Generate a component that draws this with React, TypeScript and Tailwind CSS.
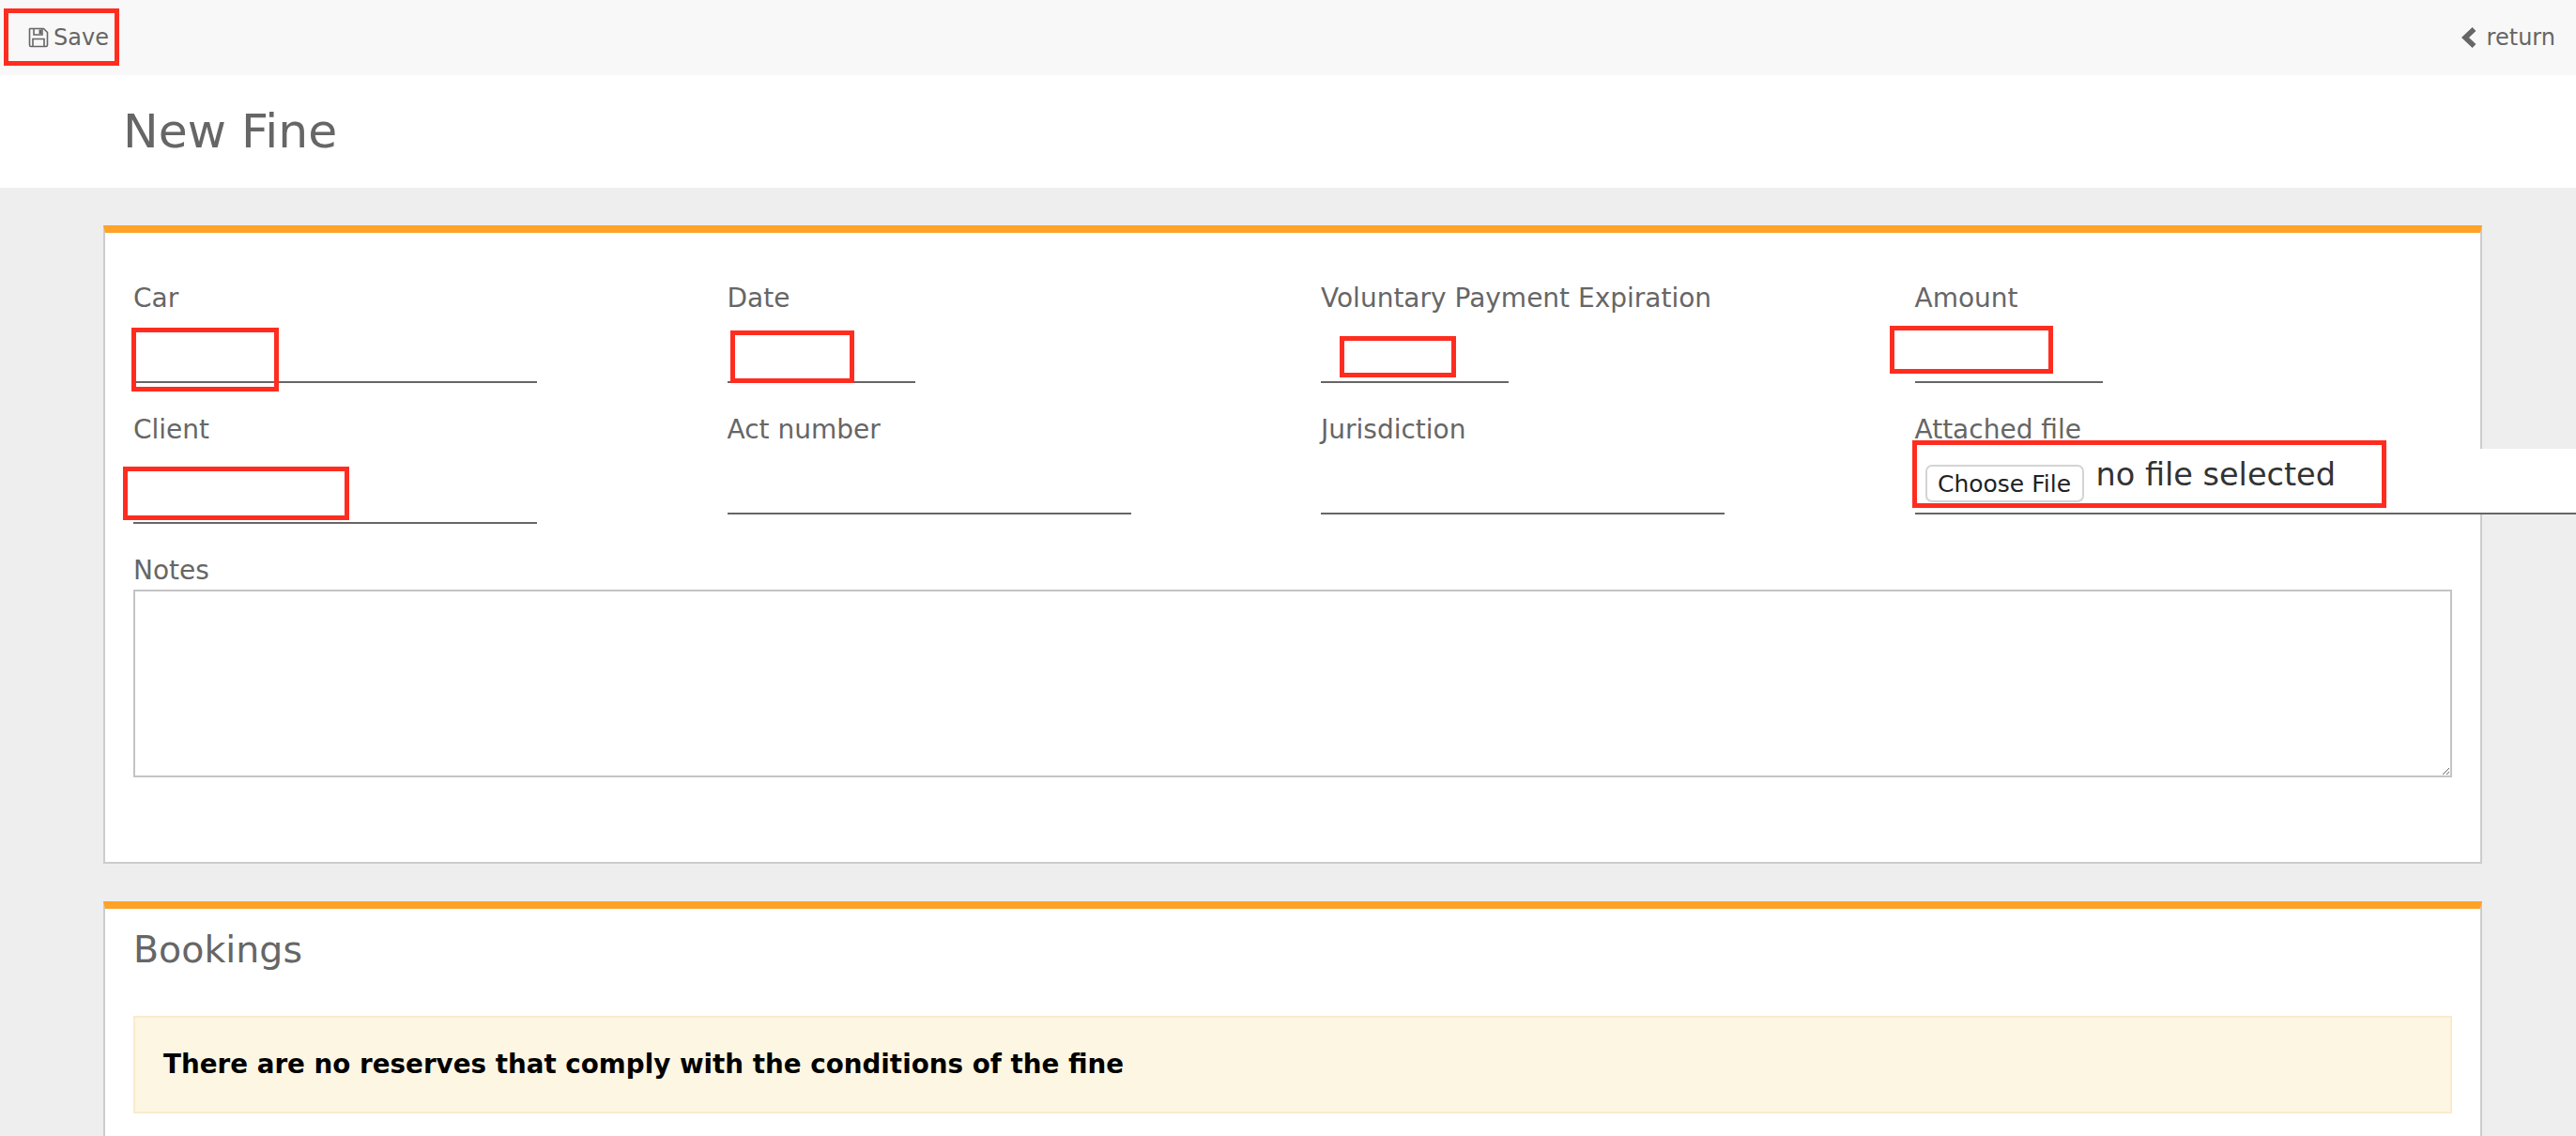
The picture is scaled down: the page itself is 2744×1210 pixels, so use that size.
import React from 'react';

// red rectangles drawn on top of the screenshot
const marks = [
  { id: 'save', className: 'left-[4px] top-[9px] w-[123px] h-[61px]' },
  { id: 'car', className: 'left-[140px] top-[349px] w-[157px] h-[68px]' },
  { id: 'date', className: 'left-[778px] top-[352px] w-[132px] h-[56px]' },
  { id: 'expiration', className: 'left-[1427px] top-[358px] w-[124px] h-[44px]' },
  { id: 'amount', className: 'left-[2013px] top-[347px] w-[174px] h-[51px]' },
  { id: 'client', className: 'left-[131px] top-[497px] w-[241px] h-[57px]' },
  { id: 'file', className: 'left-[2037px] top-[469px] w-[505px] h-[72px]' },
];

function SaveIcon() {
  return (
    <svg width="22" height="22" viewBox="0 0 22 22" fill="none" className="shrink-0">
      <path d="M2 1.5H16.5L20.5 5.5V19C20.5 19.8 19.8 20.5 19 20.5H3C2.2 20.5 1.5 19.8 1.5 19V2C1.5 1.7 1.7 1.5 2 1.5Z" stroke="#666" strokeWidth="1.6" />
      <path d="M6 1.5V8H15V1.5" stroke="#666" strokeWidth="1.6" />
      <rect x="11.5" y="2.5" width="2.5" height="4.5" fill="#666" />
      <path d="M5 20.5V12.5H17V20.5" stroke="#666" strokeWidth="1.6" />
    </svg>
  );
}

function Field({ label, width, height = 'h-[70px]' }: { label: string; width: string; height?: string }) {
  return (
    <div className="px-[30px]">
      <label className="block h-[40px] leading-[40px]">{label}</label>
      <input type="text" className={`block ${width} ${height} border-b-2 border-[#666] bg-transparent outline-none`} />
    </div>
  );
}

export default function App() {
  return (
    <div className="relative h-screen overflow-hidden bg-[#eeeeee] text-[#666666] text-[28px] font-['DejaVu_Sans',sans-serif]">
      {/* Toolbar */}
      <div className="h-[80px] bg-[#f8f8f8] flex items-center justify-between pl-[30px] pr-[22px]">
        <a className="flex items-center gap-[5px] text-[24px]">
          <SaveIcon />
          Save
        </a>
        <a className="flex items-center gap-[11px] text-[24px]">
          <svg width="16" height="24" viewBox="0 0 16 24" fill="none">
            <path d="M13.5 3L4 12L13.5 21" stroke="#666" strokeWidth="5.5" />
          </svg>
          return
        </a>
      </div>

      {/* Title */}
      <div className="h-[120px] bg-white flex items-center pl-[131px]">
        <h1 className="text-[50.4px] font-normal">New Fine</h1>
      </div>

      <div className="pt-[40px] pl-[110px] pr-[100px]">
        {/* Form card */}
        <section className="h-[680px] bg-white border-2 border-t-8 border-[#cccccc] border-t-[#ffa227] pt-[50px]">
          <div className="grid grid-cols-4 gap-y-[30px]">
            <Field label="Car" width="w-[430px]" />
            <Field label="Date" width="w-[200px]" />
            <Field label="Voluntary Payment Expiration" width="w-[200px]" />
            <Field label="Amount" width="w-[200px]" />
            <Field label="Client" width="w-[430px]" height="h-[80px]" />
            <Field label="Act number" width="w-[430px]" />
            <Field label="Jurisdiction" width="w-[430px]" />
            <div className="px-[30px]">
              <label className="block h-[40px] leading-[40px]">Attached file</label>
              <div className="w-[704px] h-[70px] border-b-2 border-[#666] bg-white flex items-start pl-[11px] pt-[17px]">
                <button className="h-[40px] w-[169px] bg-white border-2 border-[#d4d4d4] rounded-[7px] text-[25px] text-[#222]">
                  Choose File
                </button>
                <span className="ml-[13px] -mt-[14px] text-[33.5px] text-[#333] leading-[50px]">no file selected</span>
              </div>
            </div>
          </div>
          <div className="px-[30px] mt-[30px]">
            <label className="block h-[40px] leading-[40px]">Notes</label>
            <textarea className="block w-full h-[200px] border-2 border-[#c4c4c4] outline-none" />
          </div>
        </section>

        {/* Bookings card */}
        <section className="mt-[40px] h-[400px] bg-white border-2 border-t-8 border-[#cccccc] border-t-[#ffa227] px-[30px]">
          <h2 className="h-[114px] pt-[18px] text-[39.5px] font-normal leading-[50px]">Bookings</h2>
          <div className="h-[104px] bg-[#fdf6e3] border-2 border-[#faebcc] flex items-center pl-[30px] text-[27.75px] font-bold text-black">
            There are no reserves that comply with the conditions of the fine
          </div>
        </section>
      </div>

      {marks.map((m) => (
        <div key={m.id} className={`absolute border-[5px] border-[#ff2d20] pointer-events-none ${m.className}`} />
      ))}
    </div>
  );
}
